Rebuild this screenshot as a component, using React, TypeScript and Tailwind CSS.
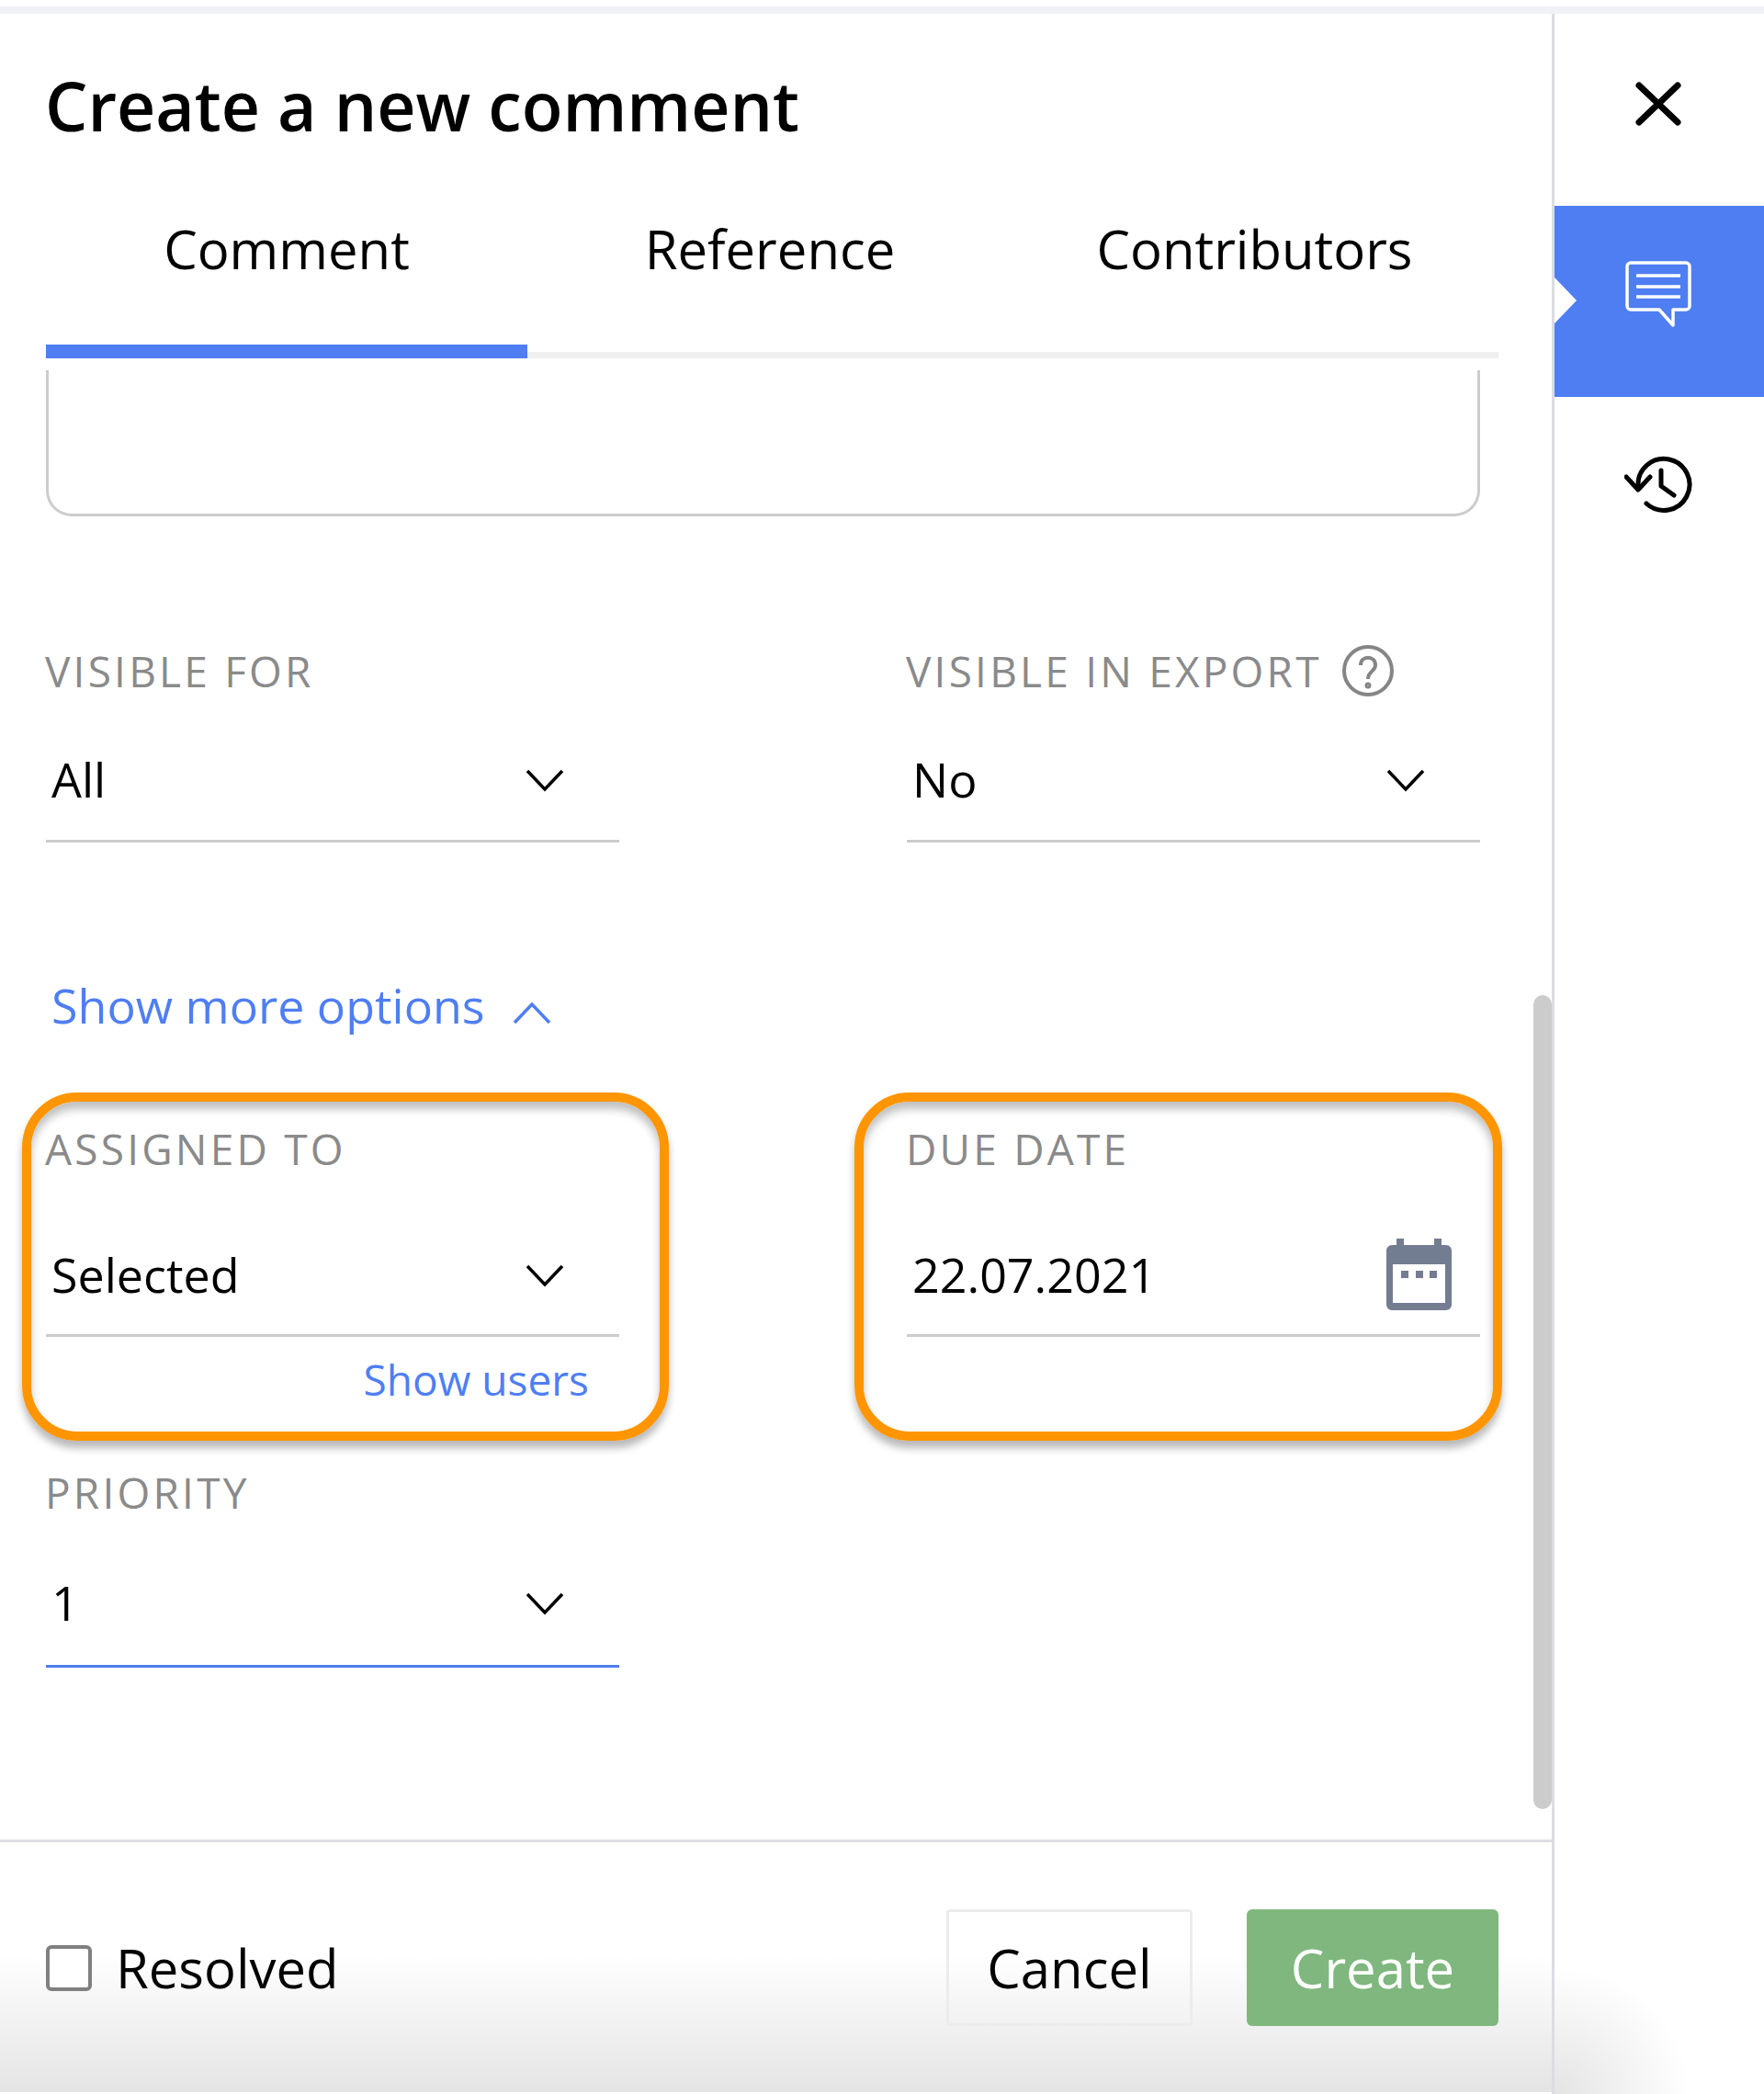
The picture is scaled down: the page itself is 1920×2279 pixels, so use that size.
import React from "react";

function Chevron({ up = false }: { up?: boolean }) {
  return (
    <svg width="42" height="26" viewBox="0 0 42 26" fill="none" stroke="currentColor" strokeWidth="3.5" className={up ? "rotate-180" : ""}>
      <path d="M2 3 L21 23 L40 3" />
    </svg>
  );
}

function Label({ text, children }: { text: string; children?: React.ReactNode }) {
  return (
    <div className="h-[60px] -ml-[1px] pb-[2px] flex items-center gap-[21px] text-[#8a8a8a] text-[46px] tracking-[3.2px] leading-none font-normal">
      <span>{text}</span>
      {children}
    </div>
  );
}

function Select({ value, cls, line = "border-[#cccccc]" }: { value: string; cls: string; line?: string }) {
  return (
    <div className={`flex items-center justify-between pl-[6px] pr-[60px] border-b-[3px] text-black text-[52px] ${line} ${cls}`}>
      <span className="mb-[2px]">{value}</span>
      <Chevron />
    </div>
  );
}

export default function App() {
  return (
    <div className="relative w-[1920px] h-[2279px] overflow-hidden bg-white flex flex-col font-['Open_Sans','Noto_Sans',sans-serif]">
      <div className="h-[7px] shrink-0" />
      <div className="h-[8px] shrink-0 bg-[#f0f1f5]" />
      <div className="flex flex-1 min-h-0">
        <div className="relative w-[1692px] shrink-0 flex flex-col border-r-[3px] border-[#dcdde3]">
          <div className="h-[202px] pl-[49px] pb-[3px] flex items-center text-[73.3px] font-semibold text-black">Create a new comment</div>
          <div className="ml-[50px] w-[1581px] h-[173px] flex">
            <div className="w-[524px] flex flex-col">
              <div className="h-[106px] flex items-center justify-center text-[58px] text-black">Comment</div>
              <div className="mt-auto h-[15px] bg-[#4f7ef3]" />
            </div>
            <div className="w-[528px] flex flex-col">
              <div className="h-[106px] flex items-center justify-center text-[58px] text-black">Reference</div>
              <div className="mt-auto h-[7px] bg-[#f0f0f0]" />
            </div>
            <div className="w-[529px] flex flex-col">
              <div className="h-[106px] pr-[2px] flex items-center justify-center text-[58px] text-black">Contributors</div>
              <div className="mt-auto h-[7px] bg-[#f0f0f0]" />
            </div>
          </div>
          <div className="ml-[50px] mt-[13px] w-[1561px] h-[159px] border-x-[3px] border-b-[3px] border-[#cccccc] rounded-b-[28px]" />
          <div className="ml-[50px] mt-[139px] w-[1561px] grid grid-cols-[624px_624px] gap-x-[313px]">
            <div>
              <Label text="VISIBLE FOR" />
              <Select value="All" cls="mt-[22px] h-[134px]" />
            </div>
            <div>
              <Label text="VISIBLE IN EXPORT">
                <svg width="58" height="58" viewBox="0 0 58 58" fill="none" stroke="#858585" strokeWidth="4">
                  <circle cx="29" cy="29" r="26" />
                  <path d="M21 23 C21 12 37 12 37 23 C37 30 29 29 29 38" />
                  <circle cx="29" cy="45" r="1.5" />
                </svg>
              </Label>
              <Select value="No" cls="mt-[22px] h-[134px]" />
            </div>
          </div>
          <div className="mt-[142px] pl-[56px] h-[70px] flex items-center gap-[30px] text-[#4f7ef3] text-[52px]">
            <span>Show more options</span>
            <span className="mt-[18px] text-[#4f7ef3]"><Chevron up /></span>
          </div>
          <div className="ml-[50px] mt-[92px] w-[1561px] grid grid-cols-[624px_624px] gap-x-[313px]">
            <div>
              <Label text="ASSIGNED TO" />
              <Select value="Selected" cls="mt-[42px] h-[132px]" />
            </div>
            <div>
              <Label text="DUE DATE" />
              <div className="mt-[42px] h-[132px] flex items-center justify-between pl-[6px] pr-[31px] border-b-[3px] border-[#cccccc] text-black text-[52px]">
                <span className="mb-[2px]">22.07.2021</span>
                <svg width="71" height="78" viewBox="0 0 71 78" fill="#737d91" className="mb-[2px]">
                  <rect x="11" y="0" width="8" height="12" />
                  <rect x="52" y="0" width="8" height="12" />
                  <path fillRule="evenodd" d="M6 7 H65 A6 6 0 0 1 71 13 V72 A6 6 0 0 1 65 78 H6 A6 6 0 0 1 0 72 V13 A6 6 0 0 1 6 7 Z M7 28 V70 H64 V28 Z" />
                  <rect x="16" y="35" width="8" height="8" />
                  <rect x="32" y="35" width="8" height="8" />
                  <rect x="47" y="35" width="8" height="8" />
                </svg>
              </div>
            </div>
          </div>
          <div className="ml-[50px] w-[624px] h-[92px] pr-[33px] flex items-center justify-end text-[#4f7ef3] text-[46px]">Show users</div>
          <div className="ml-[50px] mt-[48px] w-[624px]">
            <Label text="PRIORITY" />
            <Select value="1" cls="mt-[22px] h-[138px]" line="border-[#4f7ef3]" />
          </div>
          <div className="mt-[187px] h-[3px] bg-[#dfdfe5] shrink-0" />
          <div className="flex-1 pt-[73px] pl-[50px] pr-[58px] border-b-[2px] border-white bg-[linear-gradient(to_bottom,#ffffff_45%,#e4e4e4_100%)]">
            <div className="flex items-center h-[127px]">
              <div className="w-[50px] h-[50px] border-[4px] border-[#808080] rounded-[6px] bg-white" />
              <span className="ml-[26px] text-[58px] text-black">Resolved</span>
              <div className="ml-auto w-[268px] h-[127px] flex items-center justify-center border-[3px] border-[#ececec] rounded-[4px] text-[58px] text-black">Cancel</div>
              <div className="ml-[59px] w-[274px] h-[127px] flex items-center justify-center rounded-[6px] bg-[#7fb77e] text-[58px] text-white">Create</div>
            </div>
          </div>
          <div className="absolute left-[1669px] top-[1068px] w-[20px] h-[886px] rounded-full bg-[#cccccc]" />
          <div className="absolute left-[24px] top-[1174px] w-[704px] h-[379px] rounded-[60px] border-[10px] border-[#ff9500] shadow-[0_8px_8px_rgba(0,0,0,0.28),inset_0_8px_10px_rgba(0,0,0,0.25)]" />
          <div className="absolute left-[930px] top-[1174px] w-[705px] h-[379px] rounded-[60px] border-[10px] border-[#ff9500] shadow-[0_8px_8px_rgba(0,0,0,0.28),inset_0_8px_10px_rgba(0,0,0,0.25)]" />
        </div>
        <div className="relative flex-1 flex flex-col">
          <div className="h-[209px] pb-[14px] pr-[2px] flex items-center justify-center">
            <svg width="50" height="50" viewBox="0 0 50 50" stroke="black" strokeWidth="7" strokeLinecap="round">
              <path d="M4 5 L46 45 M46 5 L4 45" />
            </svg>
          </div>
          <div className="relative h-[208px] pb-[16px] pr-[2px] bg-[#4f7ef3] flex items-center justify-center">
            <div className="absolute left-0 top-[78px] w-0 h-0 border-y-[25px] border-y-transparent border-l-[24px] border-l-white" />
            <svg width="72" height="72" viewBox="0 0 72 72" fill="none" stroke="white" strokeWidth="3.5" strokeLinejoin="round">
              <path d="M6 2 H66 A4 4 0 0 1 70 6 V49 A4 4 0 0 1 66 53 H52 V70 L37 53 H6 A4 4 0 0 1 2 49 V6 A4 4 0 0 1 6 2 Z" />
              <path d="M12 16 H60 M12 28 H60 M12 39 H60" />
            </svg>
          </div>
          <div className="h-[192px] pr-[2px] flex items-center justify-center">
            <svg width="74" height="64" viewBox="0 0 74 64" fill="none" stroke="black" strokeWidth="5" strokeLinecap="round" strokeLinejoin="round">
              <path d="M15 33 A28 28 0 1 1 24 52" />
              <path d="M2 23 L15 37 L28 23" />
              <path d="M40 16 V33 L54 43" />
            </svg>
          </div>
          <div className="absolute left-0 bottom-0 w-[150px] h-[140px] bg-[radial-gradient(ellipse_at_bottom_left,#e4e4e4,rgba(255,255,255,0)_70%)]" />
        </div>
      </div>
    </div>
  );
}
